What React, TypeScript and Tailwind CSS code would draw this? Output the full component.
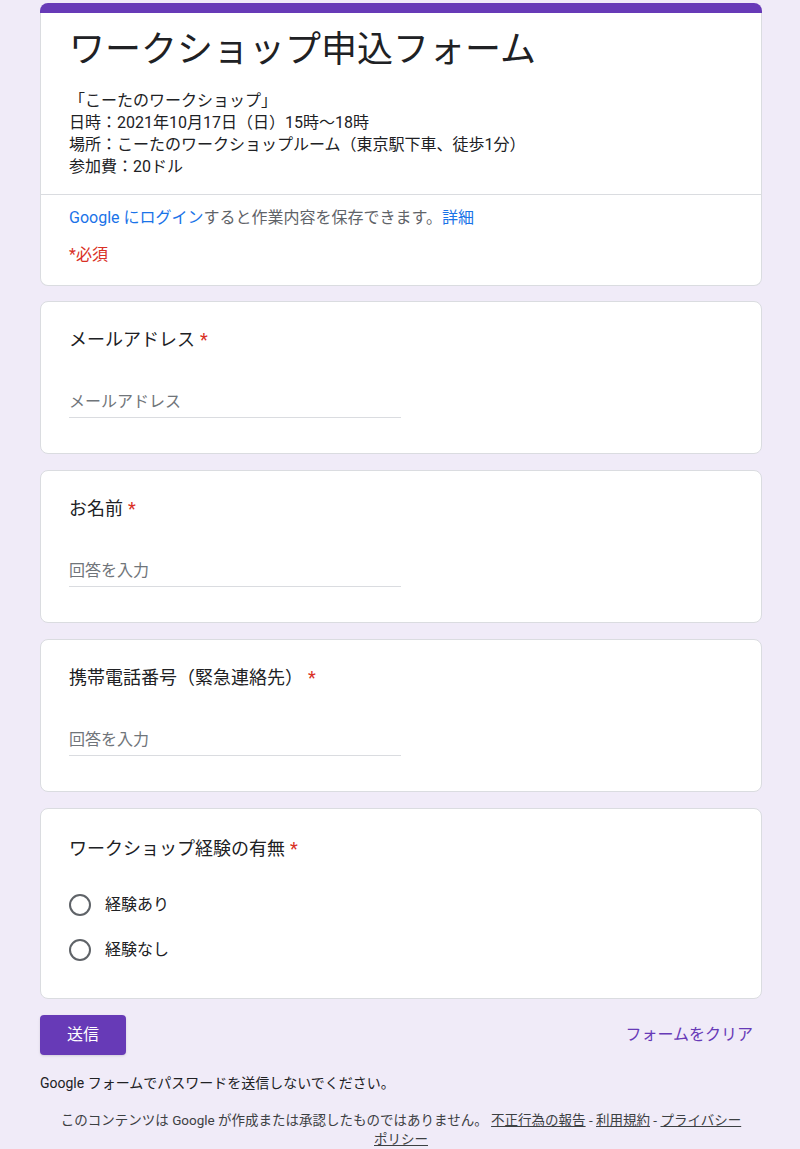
const FONT = "font-['Roboto','Noto_Sans_CJK_JP',sans-serif]";

function Required() {
  return <span className="ml-[5px] text-[#d93025]">*</span>;
}

function HeaderCard() {
  return (
    <section className="w-full">
      <div className="h-[10px] rounded-t-lg bg-[#673ab7]" />
      <div className="rounded-b-lg border-x border-b border-[#dadce0] bg-white">
        <div className="px-[28px] pt-[13px] pb-[16px]">
          <h1 className="text-[36px] leading-[48px] text-[#202124]">
            ワークショップ申込フォーム
          </h1>
          <div className="mt-[16px] text-[16px] leading-[22px] text-[#202124]">
            <p>「こーたのワークショップ」</p>
            <p>日時：2021年10月17日（日）15時〜18時</p>
            <p>場所：こーたのワークショップルーム（東京駅下車、徒歩1分）</p>
            <p>参加費：20ドル</p>
          </div>
        </div>
        <div className="h-px bg-[#dadce0]" />
        <div className="px-[28px] pt-[11px] pb-[18px]">
          <p className="text-[16px] leading-[24px] text-[#5f6368]">
            <span className="text-[#1a73e8]">Google にログイン</span>
            すると作業内容を保存できます。
            <span className="text-[#1a73e8]">詳細</span>
          </p>
          <p className="mt-[13px] text-[16px] leading-[24px] text-[#d93025]">*必須</p>
        </div>
      </div>
    </section>
  );
}

function TextQuestion({ title, placeholder, first }: { title: string; placeholder: string; first?: boolean }) {
  return (
    <section
      className={`${first ? 'mt-[15px]' : 'mt-[16px]'} rounded-lg border border-[#dadce0] bg-white px-[28px] pt-[26px] pb-[35px]`}
    >
      <h2 className="text-[18px] leading-[24px] text-[#202124]">
        {title}
        <Required />
      </h2>
      <div className="mt-[38px] h-[28px] w-[332px] border-b border-[#dadce0]">
        <span className="block text-[16px] leading-[24px] text-[#70757a]">{placeholder}</span>
      </div>
    </section>
  );
}

function RadioQuestion({ title, options }: { title: string; options: string[] }) {
  return (
    <section className="mt-[16px] rounded-lg border border-[#dadce0] bg-white px-[28px] pt-[28px] pb-[26px]">
      <h2 className="text-[18px] leading-[24px] text-[#202124]">
        {title}
        <Required />
      </h2>
      <div className="mt-[21px] flex flex-col">
        {options.map((opt) => (
          <label key={opt} className="flex h-[45px] items-center gap-[14px]">
            <span className="h-[22px] w-[22px] rounded-full border-2 border-[#5f6368]" />
            <span className="text-[16px] leading-[24px] text-[#202124]">{opt}</span>
          </label>
        ))}
      </div>
    </section>
  );
}

export default function App() {
  return (
    <main className={`${FONT} min-h-[1149px] w-full bg-[#f0ebf8] pt-[3px]`}>
      <div className="ml-[40px] w-[722px]">
        <HeaderCard />
        <TextQuestion first title="メールアドレス" placeholder="メールアドレス" />
        <TextQuestion title="お名前" placeholder="回答を入力" />
        <TextQuestion title="携帯電話番号（緊急連絡先）" placeholder="回答を入力" />
        <RadioQuestion title="ワークショップ経験の有無" options={['経験あり', '経験なし']} />

        <div className="mt-[16px] flex items-center justify-between">
          <button className="h-[40px] w-[86px] rounded-[4px] bg-[#673ab7] text-[16px] text-white shadow-sm">
            送信
          </button>
          <span className="pr-[9px] text-[16px] leading-[24px] text-[#673ab7]">フォームをクリア</span>
        </div>

        <p className="mt-[18px] text-[14px] leading-[20px] text-[#202124]">
          Google フォームでパスワードを送信しないでください。
        </p>
        <p className="mt-[18px] text-center text-[13.5px] leading-[19px] text-[#3c4043]">
          このコンテンツは Google が作成または承認したものではありません。{' '}
          <span className="underline">不正行為の報告</span> - <span className="underline">利用規約</span> -{' '}
          <span className="underline">
            プライバシー
            <br />
            ポリシー
          </span>
        </p>
      </div>
    </main>
  );
}
